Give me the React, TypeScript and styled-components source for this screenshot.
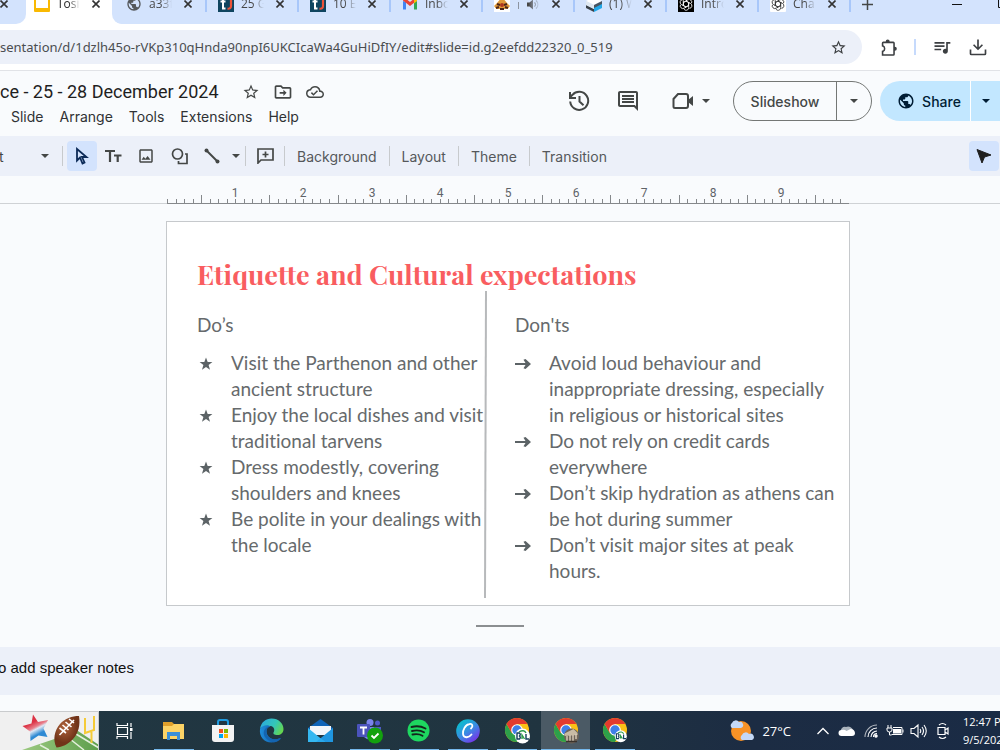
import React from "react";
import styled, { createGlobalStyle, css } from "styled-components";

const Global = createGlobalStyle`
  * { box-sizing: border-box; }
  html, body, #root { margin: 0; height: 100%; }
  body { overflow: hidden; background: #f9fbfd; font-family: Inter, Roboto, "Liberation Sans", sans-serif; color: #444746; }
  button { border: 0; background: none; padding: 0; margin: 0; font: inherit; color: inherit; display: flex; align-items: center; justify-content: center; cursor: pointer; flex: none; }
  svg { display: block; flex: none; }
`;

const Page = styled.div`
  display: flex;
  flex-direction: column;
  min-height: 100vh;
  overflow: hidden;
`;

/* ---------- browser chrome ---------- */

const TabStrip = styled.div`
  height: 24px;
  overflow: hidden;
  background: #d3e3fd;
`;

const TabRow = styled.div`
  display: flex;
  align-items: stretch;
  height: 40px;
  margin-top: -16px;
`;

const Tab = styled.div<{ $active?: boolean }>`
  display: flex;
  align-items: center;
  flex: none;
  width: ${(p) => (p.$active ? 86 : 92)}px;
  padding-left: ${(p) => (p.$active ? 8 : 11)}px;
  background: ${(p) => (p.$active ? "#ffffff" : "#d3e3fd")};
  font: 12px/16px "Open Sans", "Noto Sans", sans-serif;
  color: ${(p) => (p.$active ? "#1f1f1f" : "#474747")};
`;

const TabEdge = styled.div`
  flex: none;
  width: 26px;
  display: flex;
  align-items: center;
  background: #d3e3fd;
  border-bottom-right-radius: 10px;
`;

const ActiveBacking = styled.div`
  display: flex;
  background: #ffffff;
`;

const InactiveBacking = styled.div`
  display: flex;
  flex: 1;
  background: #ffffff;
`;

const InactiveGroup = styled.div`
  display: flex;
  flex: 1;
  padding-left: 3px;
  background: #d3e3fd;
  border-bottom-left-radius: 10px;
  overflow: hidden;
`;

const TabTitle = styled.span`
  width: 23px;
  margin-left: 7px;
  margin-right: 9px;
  overflow: hidden;
  white-space: nowrap;
  mask-image: linear-gradient(to right, #000 50%, transparent 100%);
`;

const TabSeparator = styled.span`
  width: 2px;
  height: 16px;
  margin-left: auto;
  background: #a8c7fa;
`;

const CloseButton = styled.button<{ $narrow?: boolean }>`
  width: ${(p) => (p.$narrow ? 8 : 14)}px;
  height: 14px;
  color: #333;
`;

const NewTabButton = styled.button`
  width: 32px;
  color: #444746;
`;

const WindowButtons = styled.div`
  display: flex;
  align-items: center;
  margin-left: auto;
  gap: 36px;
  color: #111;
`;

const AddressRow = styled.div`
  display: flex;
  align-items: center;
  height: 47px;
  padding-right: 12px;
  background: #ffffff;
  border-bottom: 1px solid #e1e3e7;
`;

const Omnibox = styled.div`
  display: flex;
  align-items: center;
  flex: 1;
  height: 34px;
  padding-right: 15px;
  background: #ecf0f9;
  border-radius: 0 17px 17px 0;
`;

const UrlInput = styled.input`
  flex: 1;
  min-width: 0;
  height: 24px;
  padding: 0;
  border: 0;
  outline: 0;
  background: transparent;
  color: #4a4d50;
  font: 13px/24px "Noto Sans", "Open Sans", sans-serif;
`;

const BrowserActions = styled.div`
  display: flex;
  align-items: center;
  gap: 16px;
  margin-left: 17px;
`;

const ActionSeparator = styled.span`
  width: 2px;
  height: 16px;
  background: #c6dafc;
`;

/* ---------- document header ---------- */

const Header = styled.header`
  display: flex;
  justify-content: space-between;
  height: 65px;
  background: #f9fbfd;
`;

const HeaderLeft = styled.div`
  display: flex;
  flex-direction: column;
  padding-top: 8px;
`;

const TitleRow = styled.div`
  display: flex;
  align-items: center;
  height: 26px;
`;

const DocTitle = styled.h1`
  margin: 0 23px 0 0;
  font: 400 18px/26px Roboto, sans-serif;
  color: #1f1f1f;
  white-space: nowrap;
`;

const TitleIcons = styled.div`
  display: flex;
  align-items: center;
  gap: 13px;
`;

const MenuBar = styled.nav`
  display: flex;
  gap: 16px;
  padding-left: 11px;
`;

const MenuItem = styled.button`
  height: 24px;
  font-size: 14px;
  line-height: 24px;
  color: #303234;
`;

const HeaderRight = styled.div`
  display: flex;
  align-items: center;
  height: 60px;
`;

const HeaderIcons = styled.div`
  display: flex;
  align-items: center;
  gap: 26px;
  margin-right: 23px;
`;

const MeetGroup = styled.button`
  gap: 8px;
  padding-left: 6px;
`;

const SplitButton = styled.div<{ $tone: "outline" | "share" }>`
  display: flex;
  height: 40px;
  font-size: 14px;
  font-weight: 500;
  overflow: hidden;
  ${(p) =>
    p.$tone === "outline"
      ? css`
          width: 139px;
          border: 1px solid #747775;
          border-radius: 20px;
          margin-right: 8px;
          color: #444746;
        `
      : css`
          width: 120px;
          padding-left: 8px;
          border-radius: 20px 0 0 20px;
          background: #c2e7ff;
          color: #001d35;
        `}
`;

const SplitMain = styled.button`
  flex: 1;
  gap: 7px;
`;

const SplitArrow = styled.button<{ $line: string; $width: number }>`
  width: ${(p) => p.$width}px;
  border-left: 1px solid ${(p) => p.$line};
`;

/* ---------- toolbar ---------- */

const Toolbar = styled.div`
  display: flex;
  align-items: center;
  height: 40px;
  background: #ecf0f9;
  font-size: 14px;
  color: #444746;
`;

const ToolButton = styled.button<{ $selected?: boolean; $width?: number }>`
  width: ${(p) => p.$width ?? 30}px;
  height: 30px;
  border-radius: 4px;
  background: ${(p) => (p.$selected ? "#d3e3fd" : "transparent")};
`;

const TextTool = styled.button`
  height: 30px;
  padding: 0 12px;
  color: #55585b;
`;

const ToolDivider = styled.span<{ $spaced?: boolean }>`
  width: 1px;
  height: 20px;
  margin: ${(p) => (p.$spaced ? "0 4px 0 5px" : "0")};
  background: #c7cacd;
`;

const ZoomTail = styled.span`
  width: 34px;
  margin-left: -1px;
`;

const PointerSlot = styled.div`
  margin-left: auto;
  padding-right: 1px;
`;

/* ---------- slide area ---------- */

const Workspace = styled.main`
  display: flex;
  flex-direction: column;
  flex: 1;
  background: #f9fbfd;
`;

const RulerBand = styled.div`
  height: 28px;
  padding-left: 16px;
  border-bottom: 1px solid #cfd2d5;
`;

const RulerTrack = styled.div`
  max-width: 684px;
  margin: 0 auto;
  height: 28px;
`;

const Stage = styled.div`
  padding: 17px 0 0 16px;
`;

const Slide = styled.article`
  display: flex;
  flex-direction: column;
  width: 100%;
  max-width: 684px;
  min-height: 385px;
  margin: 0 auto;
  padding: 35px 10px 7px 30px;
  background: #ffffff;
  border: 1px solid #c6c9cc;
`;

const SlideTitle = styled.h2`
  margin: 0;
  font: 700 27px/34px "Playfair Display", "Liberation Serif", serif;
  color: #f95d60;
  white-space: nowrap;
`;

const Columns = styled.div`
  display: grid;
  grid-template-columns: 286px 4px 1fr;
`;

const Column = styled.section<{ $inset?: boolean }>`
  padding-top: 21px;
  padding-left: ${(p) => (p.$inset ? 28 : 0)}px;
  font: 19px/26px Lato, sans-serif;
  font-variant-ligatures: none;
  color: #666a6c;
`;

const ColumnHead = styled.h3`
  margin: 0 0 12px;
  font: inherit;
`;

const PointList = styled.ul`
  margin: 0;
  padding: 0;
  list-style: none;
`;

const Point = styled.li`
  display: grid;
  grid-template-columns: 34px 1fr;
  white-space: nowrap;
`;

const Marker = styled.span`
  display: flex;
  align-items: center;
  height: 28px;
`;

const SplitHandle = styled.div`
  width: 48px;
  height: 2px;
  margin: 19px auto 20px;
  background: #8b8e91;
`;

const Notes = styled.section`
  display: flex;
  align-items: center;
  height: 48px;
  padding-bottom: 6px;
  background: #ecf0f9;
  font: 15px/20px "Liberation Sans", Arial, sans-serif;
  color: #111;
`;

const NotesText = styled.span`
  margin-left: -2px;
`;

const NotesGap = styled.div`
  height: 16px;
`;

/* ---------- task bar ---------- */

const TaskBar = styled.footer`
  display: flex;
  height: 39px;
  overflow: hidden;
  background: linear-gradient(to right, #213742 0%, #203440 55%, #1c2c43 75%, #1a2b45 100%);
`;

const TaskButtons = styled.div`
  display: flex;
  padding-left: 1px;
`;

const TaskButton = styled.button<{ $open?: boolean; $current?: boolean }>`
  width: 49px;
  height: 39px;
  background-color: ${(p) => (p.$current ? "#4b5a65" : "transparent")};
  background-image: ${(p) => (p.$open ? "linear-gradient(#76b9ed, #76b9ed)" : "none")};
  background-repeat: no-repeat;
  background-size: ${(p) => (p.$current ? "49px 1px" : "40px 1px")};
  background-position: center bottom;
`;

const Tray = styled.div`
  display: flex;
  align-items: center;
  margin-left: auto;
  color: #fff;
  font: 13px/18px "Open Sans", "Noto Sans", sans-serif;
`;

const Weather = styled.button`
  gap: 7px;
  margin-right: 20px;
`;

const TrayIcons = styled.div`
  display: grid;
  grid-template-columns: repeat(6, 24px);
  place-items: center;
`;

const Clock = styled.time`
  width: 37px;
  margin-left: 8px;
  overflow: hidden;
  white-space: nowrap;
  font-size: 11px;
`;

/* ---------- drawings ---------- */

const Material = ({ d, size = 20, color = "currentColor" }: { d: string; size?: number; color?: string }) => (
  <svg width={size} height={size} viewBox="0 0 24 24" fill={color} aria-hidden="true">
    <path d={d} />
  </svg>
);

const STAR = "M22 9.24l-7.19-.62L12 2 9.19 8.63 2 9.24l5.46 4.73L5.82 21 12 17.27 18.18 21l-1.63-7.03L22 9.24zM12 15.4l-3.76 2.27 1-4.28-3.32-2.88 4.38-.38L12 6.1l1.71 4.04 4.38.38-3.32 2.88 1 4.28L12 15.4z";
const FOLDER_MOVE = "M20 6h-8l-2-2H4c-1.1 0-2 .9-2 2v12c0 1.1.9 2 2 2h16c1.1 0 2-.9 2-2V8c0-1.1-.9-2-2-2zm0 12H4V6h5.17l2 2H20v10zm-7.5-1.2L16.300 13l-3.800-3.800v2.800H8v2h4.500z";
const CLOUD_DONE = "M19.35 10.04A7.49 7.49 0 0 0 12 4C9.11 4 6.6 5.64 5.35 8.04A5.994 5.994 0 0 0 0 14c0 3.31 2.69 6 6 6h13c2.76 0 5-2.24 5-5 0-2.64-2.05-4.78-4.65-4.96zM19 18H6c-2.21 0-4-1.79-4-4s1.79-4 4-4h.71C7.37 7.69 9.48 6 12 6c3.04 0 5.5 2.46 5.5 5.5v.5H19c1.66 0 3 1.34 3 3s-1.34 3-3 3zm-9-3.82l-2.09-2.09L6.5 13.5 10 17l6.01-6.01-1.41-1.41z";
const COMMENT = "M22 4c0-1.1-.9-2-2-2H4c-1.1 0-2 .9-2 2v12c0 1.1.9 2 2 2h14l4 4V4zM20 4v13.17L18.83 16H4V4h16zM6 12h12v2H6zm0-3h12v2H6zm0-3h12v2H6z";
const GLOBE = "M12 2C6.48 2 2 6.48 2 12s4.48 10 10 10 10-4.48 10-10S17.52 2 12 2zm-1 17.93c-3.95-.49-7-3.85-7-7.93 0-.62.08-1.21.21-1.79L9 15v1c0 1.1.9 2 2 2v1.93zm6.9-2.54c-.26-.81-1-1.39-1.9-1.39h-1v-3c0-.55-.45-1-1-1H8v-2h2c.55 0 1-.45 1-1V7h2c1.1 0 2-.9 2-2v-.41c2.93 1.19 5 4.06 5 7.41 0 2.08-.8 3.97-2.1 5.39z";
const IMAGE = "M19 5v14H5V5h14m0-2H5c-1.1 0-2 .9-2 2v14c0 1.1.9 2 2 2h14c1.1 0 2-.9 2-2V5c0-1.1-.9-2-2-2zm-4.86 8.86l-3 3.87L9 13.14 6 17h12l-3.86-5.14z";
const EXTENSION = "M8.5 4.5a2.500 2.500 0 0 1 5 0H18a2 2 0 0 1 2 2V11a2.500 2.500 0 0 1 0 5v4.500a2 2 0 0 1-2 2H3.500V16.200a2.700 2.700 0 0 0 0-5.400V6.500a2 2 0 0 1 2-2zM5.500 6.500v2.800a4.700 4.700 0 0 1 0 8.400v2.800H18V6.500z";
const QUEUE = "M15 6H3v2h12V6zm0 4H3v2h12v-2zM3 16h8v-2H3v2zM17 6v8.18c-.31-.11-.65-.18-1-.18-1.66 0-3 1.34-3 3s1.34 3 3 3 3-1.34 3-3V8h3V6h-5z";
const DOWNLOAD = "M13 3v9.200l3.600-3.600L18 10l-6 6-6-6 1.400-1.400L11 12.200V3zM2 15h2v5h16v-5h2v5a2 2 0 0 1-2 2H4a2 2 0 0 1-2-2z";

const HistoryIcon = () => (
  <svg width="22" height="22" viewBox="0 0 22 22" fill="none" stroke="currentColor" strokeWidth="2" aria-hidden="true">
    <path d="M2.200 11.500a9 9 0 1 0 2.300-6.700L2 7.300M2 2v6h6M11.500 6v5.500l4 3.700" />
  </svg>
);

const Caret = () => (
  <svg width="8" height="4" viewBox="0 0 8 4" aria-hidden="true">
    <path d="M0 0h8L4 4z" fill="currentColor" />
  </svg>
);

const CloseX = () => (
  <svg width="8" height="8" viewBox="0 0 8 8" aria-hidden="true">
    <path d="M0.500 0.500l7 7M7.500 0.500l-7 7" stroke="currentColor" strokeWidth="1.600" />
  </svg>
);

const SlidesFavicon = () => (
  <svg width="16" height="16" viewBox="0 0 16 16">
    <rect width="16" height="16" rx="1" fill="#f9b902" />
    <rect x="2" y="2" width="12" height="10" fill="#fff" />
  </svg>
);

const GlobeFavicon = () => <Material d={GLOBE} size={16} color="#55595d" />;

const TjFavicon = () => (
  <svg width="16" height="16" viewBox="0 0 16 16">
    <rect width="16" height="16" fill="#0f4560" />
    <path d="M5 2v10.500h2.500M2.500 5.500h5" stroke="#fff" strokeWidth="2" fill="none" />
    <path d="M13 3v7c0 2-1 3-3.500 2.700" stroke="#ed5338" strokeWidth="2.200" fill="none" />
  </svg>
);

const GmailFavicon = () => (
  <svg width="16" height="16" viewBox="0 0 16 16">
    <path d="M1 5v8.500h3V6z" fill="#4285f4" />
    <path d="M12 6v7.500h3V5z" fill="#34a853" />
    <path d="M1 4.500L8 10l7-5.500V2.500l-2-.5L8 6 3 2l-2 .500z" fill="#ea4335" />
    <path d="M12 3v4.500l3-2.500V3z" fill="#fbbc04" />
  </svg>
);

const AntFavicon = () => (
  <svg width="16" height="16" viewBox="0 0 16 16">
    <rect width="16" height="16" fill="#fff" />
    <path d="M3 7l5-6 5 6 3 3-2.500 3h-11L0 10z" fill="#e09a3a" />
    <path d="M3 8l3 1M13 8l-3 1M2 12l3-1M14 12l-3-1M6 13h4" stroke="#4a2418" strokeWidth="2" fill="none" />
    <circle cx="8" cy="9" r="2" fill="#b0381e" />
  </svg>
);

const BoxFavicon = () => (
  <svg width="16" height="16" viewBox="0 0 16 16">
    <path d="M0 5l8-4 8 4-8 4z" fill="#fff" />
    <path d="M0 9v3l8 4v-3z" fill="#3a4148" />
    <path d="M16 7v5l-8 4v-5z" fill="#23a8e8" />
    <path d="M0 5l8 4v4L0 9z" fill="#dfe8f0" />
    <path d="M16 5L8 9v3l8-4z" fill="#4a5560" />
  </svg>
);

const KnotFavicon = ({ dark }: { dark?: boolean }) => (
  <svg width="16" height="16" viewBox="0 0 16 16">
    <rect width="16" height="16" rx={dark ? 0 : 1} fill={dark ? "#000" : "#fff"} />
    <g fill="none" stroke={dark ? "#fff" : "#333"} strokeWidth=".8">
      {[0, 60, 120, 180, 240, 300].map((a) => (
        <path key={a} transform={`rotate(${a} 8 8)`} d="M5.300 6.500V4.200a2.600 2.600 0 0 1 4.800-1.300M5.300 6.500l2.700-1.500 3.500 2" />
      ))}
    </g>
  </svg>
);

const Speaker = () => (
  <svg width="23" height="13" viewBox="0 0 23 13" aria-hidden="true">
    <path d="M10 4.500h2.500L16 1.500v10L12.500 8.500H10z" fill="currentColor" />
    <path d="M17.500 4.500a2.500 2.500 0 0 1 0 4M19 2.500a5 5 0 0 1 0 8" stroke="currentColor" strokeWidth="1.100" fill="none" />
    <path d="M1.500 4v7" stroke="currentColor" opacity=".5" />
  </svg>
);

const SlideRuler = () => {
  const inch = 68.2;
  const ticks = Array.from({ length: 80 }, (_, i) => i);
  return (
    <svg width="684" height="28" viewBox="0 0 684 28" aria-hidden="true">
      {ticks.map((i) => (
        <rect key={i} x={Math.round(1 + (i * inch) / 8)} y={i % 8 === 4 ? 19 : 23} width="1" height={i % 8 === 4 ? 8 : 4} fill="#85888b" />
      ))}
      <rect x="1" y="27" width="682" height="1" fill="#85888b" />
      {[1, 2, 3, 4, 5, 6, 7, 8, 9].map((n) => (
        <text key={n} x={Math.round(n * inch + 1)} y="21" textAnchor="middle" fontSize="12" fontFamily="Roboto, sans-serif" fill="#5f6368">
          {n}
        </text>
      ))}
    </svg>
  );
};

const StarBullet = () => (
  <svg width="18" height="14" viewBox="0 0 18 14" aria-hidden="true">
    <path d="M9 0.500l1.700 4.600h4.700l-3.800 2.900 1.400 4.700L9 9.900l-4 2.800 1.400-4.700L2.600 5.100h4.700z" fill="#5c6366" />
  </svg>
);

const ArrowBullet = () => (
  <svg width="18" height="12" viewBox="0 0 18 12" aria-hidden="true">
    <path d="M0 5h10.500L8.500 1.800 10.500 1 16 6l-5.500 5-2-.8L10.500 7H0z" fill="#5c6366" />
  </svg>
);

const FootballArt = () => (
  <svg width="99" height="39" viewBox="0 0 99 39" aria-hidden="true">
    <defs>
      <linearGradient id="field" x1="0" x2="1"><stop offset="0" stopColor="#9cc980" /><stop offset="1" stopColor="#5d9e4c" /></linearGradient>
      <linearGradient id="star" gradientUnits="userSpaceOnUse" x1="29" y1="8" x2="40" y2="29"><stop offset=".2" stopColor="#dc3345" /><stop offset=".42" stopColor="#e8808c" /><stop offset=".52" stopColor="#dfe8f4" /><stop offset=".75" stopColor="#2f8ad4" /></linearGradient>
      <radialGradient id="ball" cx=".4" cy=".35"><stop offset="0" stopColor="#b0643c" /><stop offset="1" stopColor="#713419" /></radialGradient>
    </defs>
    <rect width="99" height="39" fill="#f0f0f0" />
    <path d="M22 39L78 20l21 14v5z" fill="url(#field)" />
    <path d="M40 34l9 5M70 28l14 11M76 23l23 14" stroke="#e4f0dc" strokeWidth="1.500" />
    <path d="M33 3.500l5 7.500 10-2-4.500 8.500 4 8.500-9-1.500-8 5.500-.5-9.500-7.500-5.500 9-2.500z" fill="url(#star)" />
    <path d="M79 5c1.500 9-.5 17-6 23-5 5.500-11 8-16.500 8.500-4-8-2-17 3.500-23.500C65 7.500 72 5 79 5z" fill="url(#ball)" />
    <path d="M59.500 24L74 9M59.500 17l6.500 5M62.500 14l6 5M65.500 11l6 5M69 8l5 4" stroke="#fff" strokeWidth="1.600" />
    <path d="M85 7v15l9-3V5M91.500 21v11" stroke="#f5cb38" strokeWidth="2" fill="none" />
    <path d="M0 .5h98.500V39" stroke="#c9cbcd" fill="none" />
  </svg>
);

const TaskViewIcon = () => (
  <svg width="18" height="18" viewBox="0 0 18 18" fill="none" stroke="#fff" strokeWidth="1.200">
    <path d="M1 1v2.500h10.500V1M1 17v-2.500h10.500V17M1.500 5.500h10v7h-10zM15 1v4M15 10v7" />
    <rect x="14" y="6" width="2.500" height="3" fill="#fff" stroke="none" />
  </svg>
);

const ExplorerIcon = () => (
  <svg width="22" height="20" viewBox="0 0 22 20">
    <path d="M0 1h9l2 2h10v6H0z" fill="#e0a02b" />
    <path d="M0 5h9l2-2h10v15H0z" fill="#fcd366" />
    <path d="M4 19v-8h13v8h-3v-4H7v4z" fill="#3a8fd8" />
  </svg>
);

const StoreIcon = () => (
  <svg width="24" height="24" viewBox="0 0 24 24">
    <path d="M7 8V3q0-2 2-2h6q2 0 2 2v5" stroke="#1f9ade" strokeWidth="2" fill="none" />
    <path d="M1 6h22v14q0 3-3 3H4q-3 0-3-3z" fill="#f3f3f3" />
    <path d="M8 10h4v4H8z" fill="#f25022" /><path d="M13 10h4v4h-4z" fill="#7fba00" />
    <path d="M8 15h4v4H8z" fill="#00a4ef" /><path d="M13 15h4v4h-4z" fill="#ffb900" />
  </svg>
);

const EdgeIcon = () => (
  <svg width="25" height="25" viewBox="0 0 25 25">
    <defs>
      <linearGradient id="eg" x1="0" x2="1" y1=".2" y2=".6"><stop offset="0" stopColor="#2ba9e0" /><stop offset=".6" stopColor="#34c7b6" /><stop offset="1" stopColor="#65d64f" /></linearGradient>
      <linearGradient id="eb" x1="0" x2="1"><stop offset="0" stopColor="#1f8fdc" /><stop offset="1" stopColor="#0d4f9c" /></linearGradient>
    </defs>
    <path d="M1 11C2 4 7 .5 12.500 .5c7 0 12 5 12 10.500 0 4-3 6-6 6-3.500 0-4.500-1.500-4-2.500 1.500-2 1-6-3-6.500C7 7.500 2 9 1 11z" fill="url(#eg)" />
    <path d="M1 11c2-4 8-4.500 10.500-2.500C7 9 7 14 8.500 17c2 4 7 5.500 13 3-2 3-5 4.500-9 4.500C5 24.500 0 18.500 1 11z" fill="url(#eb)" />
    <path d="M11.500 8.500C7 9 6.500 14 8.500 17.500c2.500 4 8 5 12.500 2.500.500 0 1.200.300.500 1-1.500 1.800-4 3-6.500 3.300C8 23 3.500 18 5 13c1-3 3.500-4.800 6.500-4.500z" fill="#1464b0" />
  </svg>
);

const MailIcon = () => (
  <svg width="25" height="23" viewBox="0 0 25 23">
    <path d="M0 9L12.500 0 25 9v3H0z" fill="#0f64b8" />
    <path d="M2 7h21v9H2z" fill="#f2f6fa" />
    <path d="M25 9L8 23h17z" fill="#1f96e0" />
    <path d="M0 9l17 14H0z" fill="#35b8f1" />
    <path d="M12.500 19.300L8 23h9z" fill="#2aa8ea" />
  </svg>
);

const TeamsIcon = () => (
  <svg width="28" height="26" viewBox="0 0 28 26">
    <circle cx="14" cy="4.500" r="3.500" fill="#7b83eb" /><circle cx="21.500" cy="5" r="2.500" fill="#5059c9" />
    <path d="M8 9h11v10q-5 5-11 0z" fill="#7b83eb" /><path d="M18 9h7v9h-7z" fill="#5059c9" />
    <rect x="1" y="6" width="13" height="13" rx="1" fill="#4b53bc" />
    <path d="M4 9.500h7M7.500 9.500v7" stroke="#fff" strokeWidth="1.800" />
    <circle cx="19" cy="17.500" r="8" fill="#13a10e" />
    <path d="M15.500 17.500l2.500 2.500 4.500-4.500" stroke="#fff" strokeWidth="1.800" fill="none" />
  </svg>
);

const SpotifyIcon = () => (
  <svg width="23" height="23" viewBox="0 0 23 23">
    <circle cx="11.500" cy="11.500" r="11" fill="#1ed760" />
    <path d="M4.500 8q7.500-2 14 1.500M5 12q7-1.700 12 1.300M5.500 15.500q6-1.200 10 1.200" stroke="#14251c" strokeWidth="1.900" fill="none" strokeLinecap="round" />
  </svg>
);

const CanvaIcon = () => (
  <svg width="24" height="24" viewBox="0 0 24 24">
    <defs><linearGradient id="cv" x1=".1" y1=".1" x2=".8" y2="1"><stop offset="0" stopColor="#05c3cc" /><stop offset=".5" stopColor="#3a8ce4" /><stop offset="1" stopColor="#7d2ae8" /></linearGradient></defs>
    <circle cx="12" cy="12" r="11.800" fill="url(#cv)" />
    <path d="M15 9.500c2.500-2 1.500-5-1.500-4.500C9.500 5.500 6.500 11 7 15c.5 4 5.500 4.500 8.500.500" stroke="#fff" strokeWidth="1.800" fill="none" strokeLinecap="round" />
  </svg>
);

const ChromeIcon = ({ badge }: { badge: "logo" | "small" | "photo" }) => (
  <svg width="26" height="28" viewBox="0 0 26 28">
    <circle cx="13" cy="13" r="12" fill="#fbc116" />
    <path d="M2.600 7a12 12 0 0 0 10.400 18l5.200-9L13 13 7.800 16z" fill="#2da04a" />
    <path d="M2.600 7A12 12 0 0 1 23.400 7H13L7.800 16z" fill="#e33b2e" />
    <circle cx="13" cy="13" r="5.800" fill="#fff" /><circle cx="13" cy="13" r="4.700" fill="#3f7fe8" />
    {badge === "photo" ? (
      <g>
        <circle cx="18.500" cy="19" r="7.500" fill="#6e6459" />
        <path d="M11.500 16.500l9-4.500 4 4v2l-13 1z" fill="#c8bba5" />
        <path d="M14 19v5M17 18v6M20 18v6M23 17v5" stroke="#dacdb8" strokeWidth="1.400" />
        <path d="M13 24.500h11" stroke="#3b332c" strokeWidth="1.500" />
      </g>
    ) : (
      <g transform={badge === "small" ? "translate(4 4) scale(.8)" : undefined}>
        <circle cx="18.500" cy="19" r="7.500" fill="#fff" />
        <path d="M13 16v6h2.500q1.500-1.500 0-3 1.500-1.500 0-3zM22 17v5h3" stroke="#123c5c" strokeWidth="1.400" fill="none" />
        <path d="M15 15q5-3 7 1M18 22v-4l2.500 4" stroke="#2c9a4b" strokeWidth="1.400" fill="none" />
      </g>
    )}
  </svg>
);

const WeatherIcon = () => (
  <svg width="26" height="24" viewBox="0 0 26 24">
    <circle cx="12" cy="12" r="10" fill="#f79226" />
    <path d="M3 9a3 3 0 0 1 0-5 4 4 0 0 1 7-1 3 3 0 0 1 2 6z" fill="#c4d8f6" />
    <path d="M13 21a3 3 0 0 1 0-5 4 4 0 0 1 7-1 3 3 0 0 1 3 6z" fill="#c4d8f6" />
  </svg>
);

const CloudIcon = () => (
  <svg width="18" height="12" viewBox="0 0 18 12">
    <path d="M3 7a4 4 0 0 1 5-5 5 5 0 0 1 7 3l-5 4z" fill="#a9b2bb" />
    <path d="M3.500 11a3 3 0 0 1 0-6q3-1 5 1l4-2q4 0 4.500 4 0 3-3 3z" fill="#fff" />
  </svg>
);

const WifiIcon = () => (
  <svg width="16" height="16" viewBox="0 0 16 16" fill="none" stroke="#fff" strokeWidth="1.100">
    <path d="M2 14A12 12 0 0 1 14 2" opacity=".65" /><path d="M5 14a9 9 0 0 1 9-9M8 14a6 6 0 0 1 6-6M10.500 14a3.500 3.500 0 0 1 3.500-3.500" />
    <circle cx="13" cy="13" r="1.200" fill="#fff" />
  </svg>
);

const BatteryIcon = () => (
  <svg width="18" height="14" viewBox="0 0 18 14" fill="none" stroke="#fff">
    <path d="M2 1v3M5 1v3M1 4h5v2q0 2-2.500 2T1 6zM3.500 8v3h2M7 3.500h9v7H5.500M17 5.500v3" />
    <path d="M7 5h8v4.500H7z" fill="#fff" stroke="none" />
  </svg>
);

const SpeakerOutline = () => (
  <svg width="18" height="16" viewBox="0 0 18 16" fill="none" stroke="#fff" strokeWidth="1.100">
    <path d="M1 5.500h3L8 2v12L4 10.500H1zM10 6q1.500 2 0 4M12 4q3 4 0 8M14 2q4.500 6 0 12" />
  </svg>
);

const MeetNowIcon = () => (
  <svg width="14" height="18" viewBox="0 0 14 18" fill="none" stroke="#fff" strokeWidth="1.200">
    <path d="M3 3q3.500-3 7 0M3 15q3.500 3 7 0M2 5.500h7v7H2zM9 8l3-2v6l-3-2" />
  </svg>
);

const tabs = [
  { title: "a33f", icon: <GlobeFavicon /> },
  { title: "25 G", icon: <TjFavicon /> },
  { title: "10 E", icon: <TjFavicon /> },
  { title: "Inbo", icon: <GmailFavicon /> },
  { title: "", icon: <AntFavicon />, audio: true },
  { title: "(1) W", icon: <BoxFavicon /> },
  { title: "Intro", icon: <KnotFavicon dark /> },
  { title: "Cha", icon: <KnotFavicon /> },
];

const dos = [
  ["Visit the Parthenon and other", "ancient structure"],
  ["Enjoy the local dishes and visit", "traditional tarvens"],
  ["Dress modestly, covering", "shoulders and knees"],
  ["Be polite in your dealings with", "the locale"],
];

const donts = [
  ["Avoid loud behaviour and", "inappropriate dressing, especially", "in religious or historical sites"],
  ["Do not rely on credit cards", "everywhere"],
  ["Don’t skip hydration as athens can", "be hot during summer"],
  ["Don’t visit major sites at peak", "hours."],
];

const Points = ({ items, bullet }: { items: string[][]; bullet: React.ReactNode }) => (
  <PointList>
    {items.map((lines) => (
      <Point key={lines[0]}>
        <Marker>{bullet}</Marker>
        <span>
          {lines.map((line, i) => (
            <React.Fragment key={line}>
              {i > 0 && <br />}
              {line}
            </React.Fragment>
          ))}
        </span>
      </Point>
    ))}
  </PointList>
);

export default function App() {
  return (
    <Page>
      <Global />
      <TabStrip>
        <TabRow>
          <ActiveBacking>
            <TabEdge>
              <CloseButton $narrow aria-label="Close tab"><CloseX /></CloseButton>
            </TabEdge>
            <Tab $active>
              <SlidesFavicon />
              <TabTitle>Tosi</TabTitle>
              <CloseButton aria-label="Close tab"><CloseX /></CloseButton>
            </Tab>
          </ActiveBacking>
          <InactiveBacking>
            <InactiveGroup>
              {tabs.map((t) => (
                <Tab key={t.title}>
                  {t.icon}
                  <TabTitle>{t.audio ? <Speaker /> : t.title}</TabTitle>
                  <CloseButton aria-label="Close tab"><CloseX /></CloseButton>
                  <TabSeparator />
                </Tab>
              ))}
              <NewTabButton aria-label="New tab">
                <svg width="11" height="11" viewBox="0 0 11 11"><path d="M5.500 0v11M0 5.500h11" stroke="currentColor" strokeWidth="1.500" /></svg>
              </NewTabButton>
              <WindowButtons>
                <button aria-label="Minimize"><svg width="10" height="10"><path d="M0 5.500h10" stroke="currentColor" /></svg></button>
                <button aria-label="Maximize"><svg width="2" height="10"><path d="M3 .5H.5v8H3" stroke="currentColor" fill="none" /></svg></button>
              </WindowButtons>
            </InactiveGroup>
          </InactiveBacking>
        </TabRow>
      </TabStrip>
      <AddressRow>
        <Omnibox>
          <UrlInput aria-label="Address" defaultValue="sentation/d/1dzlh45o-rVKp310qHnda90npI6UKCIcaWa4GuHiDfIY/edit#slide=id.g2eefdd22320_0_519" />
          <button aria-label="Bookmark"><Material d={STAR} size={17} color="#3c3f42" /></button>
        </Omnibox>
        <BrowserActions>
          <button aria-label="Extensions"><Material d={EXTENSION} size={19} color="#3c3f42" /></button>
          <ActionSeparator />
          <button aria-label="Media"><Material d={QUEUE} size={20} color="#3c3f42" /></button>
          <button aria-label="Downloads"><Material d={DOWNLOAD} size={20} color="#3c3f42" /></button>
        </BrowserActions>
      </AddressRow>

      <Header>
        <HeaderLeft>
          <TitleRow>
            <DocTitle>ce - 25 - 28 December 2024</DocTitle>
            <TitleIcons>
              <button aria-label="Star"><Material d={STAR} size={18} /></button>
              <button aria-label="Move"><Material d={FOLDER_MOVE} size={20} /></button>
              <button aria-label="Saved to Drive"><Material d={CLOUD_DONE} size={18} /></button>
            </TitleIcons>
          </TitleRow>
          <MenuBar>
            {["Slide", "Arrange", "Tools", "Extensions", "Help"].map((m) => (
              <MenuItem key={m}>{m}</MenuItem>
            ))}
          </MenuBar>
        </HeaderLeft>
        <HeaderRight>
          <HeaderIcons>
            <button aria-label="Version history"><HistoryIcon /></button>
            <button aria-label="Comments"><Material d={COMMENT} size={24} /></button>
            <MeetGroup aria-label="Meet">
              <svg width="22" height="18" viewBox="0 0 22 18">
                <path d="M6 2h8q2 0 2 2v10q0 2-2 2H3q-1.500 0-1.500-1.500V7z" fill="none" stroke="currentColor" strokeWidth="2" />
                <path d="M16 8l5-4v10l-5-4z" fill="currentColor" />
              </svg>
              <Caret />
            </MeetGroup>
          </HeaderIcons>
          <SplitButton $tone="outline">
            <SplitMain>Slideshow</SplitMain>
            <SplitArrow aria-label="Slideshow options" $line="#747775" $width={35}><Caret /></SplitArrow>
          </SplitButton>
          <SplitButton $tone="share">
            <SplitMain><Material d={GLOBE} size={18} />Share</SplitMain>
            <SplitArrow aria-label="Share options" $line="#ffffff" $width={30}><Caret /></SplitArrow>
          </SplitButton>
        </HeaderRight>
      </Header>

      <Toolbar>
        <ZoomTail>t</ZoomTail>
        <ToolButton $width={24} aria-label="Zoom"><Caret /></ToolButton>
        <ToolDivider $spaced />
        <ToolButton $selected aria-label="Select">
          <svg width="14" height="18" viewBox="0 0 14 18"><path d="M2 2v11.500l3-3 2.500 6 2-1-2.500-5.500h4.500z" fill="none" stroke="#0b2a57" strokeWidth="1.800" /></svg>
        </ToolButton>
        <ToolButton $width={32} aria-label="Text box">
          <svg width="17" height="14" viewBox="0 0 17 14"><path d="M0 2h10M5 2v11M9 6.500h7.500M12.700 6.500V13" stroke="currentColor" strokeWidth="2.200" fill="none" /></svg>
        </ToolButton>
        <ToolButton $width={34} aria-label="Image"><Material d={IMAGE} size={18} /></ToolButton>
        <ToolButton $width={34} aria-label="Shape">
          <svg width="18" height="17" viewBox="0 0 18 17"><circle cx="6.500" cy="6" r="5" fill="none" stroke="currentColor" strokeWidth="1.700" /><path d="M14 6h2v9.500H7.500V13" fill="none" stroke="currentColor" strokeWidth="1.700" /></svg>
        </ToolButton>
        <ToolButton aria-label="Line">
          <svg width="16" height="16" viewBox="0 0 16 16"><path d="M2 2l12 12" stroke="currentColor" strokeWidth="2" /><circle cx="2.500" cy="2.500" r="2" fill="currentColor" /><circle cx="13.500" cy="13.500" r="2" fill="currentColor" /></svg>
        </ToolButton>
        <ToolButton $width={18} aria-label="Line options"><Caret /></ToolButton>
        <ToolDivider />
        <ToolButton $width={38} aria-label="Add comment">
          <svg width="17" height="16" viewBox="0 0 17 16"><path d="M1 1h15v11H4l-3 3z M8.500 3.500v6M5.500 6.500h6" fill="none" stroke="currentColor" strokeWidth="1.700" /></svg>
        </ToolButton>
        <ToolDivider />
        <TextTool>Background</TextTool>
        <ToolDivider />
        <TextTool>Layout</TextTool>
        <ToolDivider />
        <TextTool>Theme</TextTool>
        <ToolDivider />
        <TextTool>Transition</TextTool>
        <PointerSlot>
          <ToolButton $selected aria-label="Pointer">
            <svg width="16" height="16" viewBox="0 0 16 16"><path d="M1 1.500l14 5.500-6.500 2L6 15z" fill="#1f1f1f" stroke="#1f1f1f" strokeLinejoin="round" /></svg>
          </ToolButton>
        </PointerSlot>
      </Toolbar>

      <Workspace>
        <RulerBand><RulerTrack><SlideRuler /></RulerTrack></RulerBand>
        <Stage>
          <Slide>
            <SlideTitle>Etiquette and Cultural expectations</SlideTitle>
            <Columns>
              <Column>
                <ColumnHead>Do’s</ColumnHead>
                <Points items={dos} bullet={<StarBullet />} />
              </Column>
              <svg width="4" height="307" viewBox="0 0 4 307"><path d="M3 0L2 307" stroke="#b7b9bb" strokeWidth="2" /></svg>
              <Column $inset>
                <ColumnHead>Don'ts</ColumnHead>
                <Points items={donts} bullet={<ArrowBullet />} />
              </Column>
            </Columns>
          </Slide>
        </Stage>
        <SplitHandle />
        <Notes><NotesText>o add speaker notes</NotesText></Notes>
        <NotesGap />
      </Workspace>

      <TaskBar>
        <button aria-label="News"><FootballArt /></button>
        <TaskButtons>
          <TaskButton aria-label="Task view"><TaskViewIcon /></TaskButton>
          <TaskButton $open aria-label="File Explorer"><ExplorerIcon /></TaskButton>
          <TaskButton aria-label="Store"><StoreIcon /></TaskButton>
          <TaskButton aria-label="Edge"><EdgeIcon /></TaskButton>
          <TaskButton aria-label="Mail"><MailIcon /></TaskButton>
          <TaskButton $open aria-label="Teams"><TeamsIcon /></TaskButton>
          <TaskButton $open aria-label="Spotify"><SpotifyIcon /></TaskButton>
          <TaskButton $open aria-label="Canva"><CanvaIcon /></TaskButton>
          <TaskButton $open aria-label="Chrome"><ChromeIcon badge="logo" /></TaskButton>
          <TaskButton $open $current aria-label="Chrome"><ChromeIcon badge="photo" /></TaskButton>
          <TaskButton $open aria-label="Chrome"><ChromeIcon badge="small" /></TaskButton>
        </TaskButtons>
        <Tray>
          <Weather><WeatherIcon />27°C</Weather>
          <TrayIcons>
            <svg width="14" height="14" viewBox="0 0 14 14"><path d="M1.500 10L7 4.500l5.500 5.500" stroke="#fff" strokeWidth="1.300" fill="none" /></svg>
            <CloudIcon /><WifiIcon /><BatteryIcon /><SpeakerOutline /><MeetNowIcon />
          </TrayIcons>
          <Clock>12:47 PM<br />9/5/2024</Clock>
        </Tray>
      </TaskBar>
    </Page>
  );
}
